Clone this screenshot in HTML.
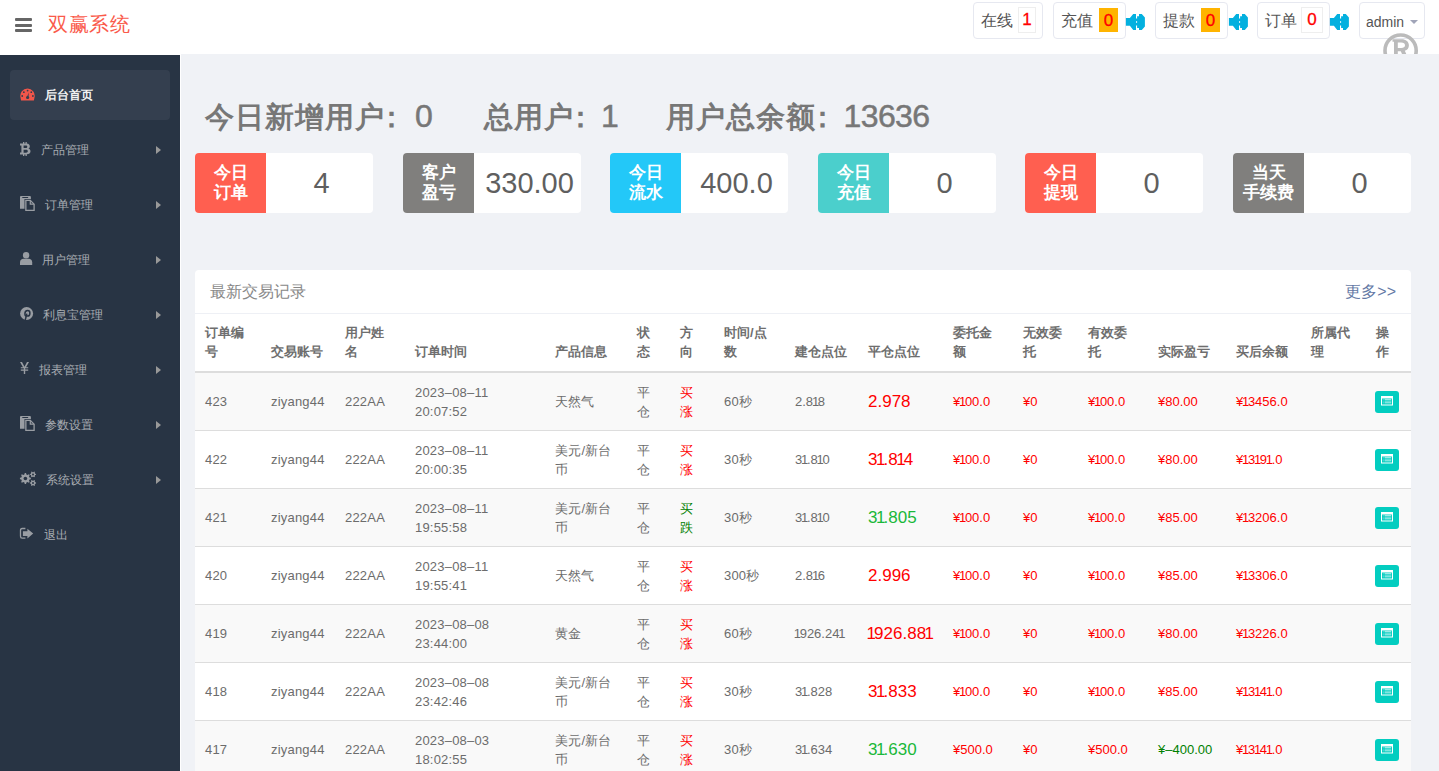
<!DOCTYPE html>
<html><head><meta charset="utf-8">
<style>
*{box-sizing:border-box;margin:0;padding:0}
html,body{width:1439px;height:771px;overflow:hidden;background:#fff;font-family:"Liberation Sans",sans-serif;color:#555}
.abs{position:absolute}
.d{font-weight:normal;font-size:32px;letter-spacing:-0.6px;-webkit-text-stroke:0.5px #777}
.c{position:relative;left:-8px}
#hdr{position:absolute;left:0;top:0;width:1439px;height:54px;background:#fff;overflow:hidden}
.ham{position:absolute;left:15px;width:17px;height:3px;background:#666;border-radius:1px}
.logo{position:absolute;left:48px;top:11px;font-size:20px;letter-spacing:0.7px;line-height:26px;color:#fa5a4b;white-space:nowrap}
.tb{position:absolute;top:2px;height:37px;border:1px solid #e6e8f0;border-radius:4px;background:#fff}
.tb .t{position:absolute;top:8px;font-size:16px;line-height:20px;color:#555;white-space:nowrap}
.tb .n{position:absolute;top:4px;height:26px;border:1px solid #eee;font-size:17px;line-height:24px;color:#f00;text-align:center;-webkit-text-stroke:0.3px #f00}
.tb .n.o{background:#ffb400;border-color:#ffb400}
.spk{position:absolute;top:13px;width:20px;height:17px}
#side{position:absolute;left:0;top:55px;width:180px;height:716px;background:#283444}
#side>*{margin-top:-1px}
.act{position:absolute;left:10px;top:16px;width:160px;height:50px;background:#343f4f;border-radius:4px}
.mi{position:absolute;font-size:12px;line-height:16px;color:#a9adb3;white-space:nowrap}
.arr{position:absolute;left:156px;width:0;height:0;border-left:5px solid #999;border-top:4px solid transparent;border-bottom:4px solid transparent}
.ico{position:absolute}
#main{position:absolute;left:181px;top:54px;width:1258px;height:717px;background:#f0f2f6}
.stat{position:absolute;top:44px;font-size:29px;letter-spacing:1px;line-height:36px;color:#777;font-weight:bold;white-space:nowrap}
.card{position:absolute;top:99px;width:178px;height:60px;background:#fff;border-radius:4px;overflow:hidden}
.card .lb{position:absolute;left:0;top:0;width:71px;height:60px;color:#fff;font-weight:bold;font-size:17px;line-height:20px;text-align:center;padding-top:10px}
.card .v{position:absolute;left:73px;top:0;width:107px;height:60px;text-align:center;font-size:29px;line-height:60px;color:#5f5f5f}
#panel{position:absolute;left:14px;top:216px;width:1216px;height:520px;background:#fff;border-radius:4px;overflow:hidden}
.ph{position:absolute;left:0;top:0;width:1216px;height:44px;border-bottom:1px solid #eef0f5}
.ph .ttl{position:absolute;left:15px;top:12px;font-size:16px;line-height:20px;color:#888}
.ph .more{position:absolute;right:15px;top:12px;font-size:16px;line-height:20px;color:#6479a5}
table{position:absolute;left:0;top:44px;width:1216px;border-collapse:collapse;table-layout:fixed;font-size:13px}
th,td{padding:11px 10px 9px;line-height:18.5px;text-align:left;vertical-align:middle;border-top:1px solid #ddd}
th{padding:10px 10px 10px;vertical-align:bottom;border-top:0;border-bottom:2px solid #ddd;color:#6e6e6e;font-weight:bold}
tbody tr:nth-child(odd){background:#f9f9f9}
td{color:#6c6c6c;letter-spacing:0.2px}
.r{color:#f00}.g{color:#008000}.gb{color:#1ab83a}
.big{font-size:17px}
.q{font-style:normal;margin-left:-0.09em;margin-right:-0.11em}
td:nth-child(n+9){letter-spacing:0}
.btn{display:inline-block;width:24px;height:22px;background:#03cdc0;border-radius:3px;position:relative;vertical-align:middle;margin-left:-1px;top:-1px}
</style></head><body>
<div id="hdr">
  <div class="ham" style="top:18px"></div>
  <div class="ham" style="top:23.5px"></div>
  <div class="ham" style="top:29px"></div>
  <div class="logo">双赢系统</div>
  <div class="tb" style="left:973px;width:70px"><span class="t" style="left:7px">在线</span><span class="n" style="left:44px;width:18px">1</span></div>
  <div class="tb" style="left:1053px;width:73px"><span class="t" style="left:7px">充值</span><span class="n o" style="left:45px;width:19px;top:5px;height:24px;line-height:23px">0</span></div>
  <svg class="spk" style="left:1125px;top:13px;width:21px;height:18px" viewBox="0 0 21 18"><path d="M0.9 5H4.9L8.2 0.95H11V16.9H8.2L4.9 12.8H0.9Z M12.1 3.3H14V0.95H16.8L19.9 4.45V13.5L16.8 16.9H14V14.9H12.1Z M11 5.5H12.1V8.2H11Z M11 9.8H12.1V12.5H11Z" fill="#03b0df"/></svg>
  <div class="tb" style="left:1155px;width:73px"><span class="t" style="left:7px">提款</span><span class="n o" style="left:45px;width:19px;top:5px;height:24px;line-height:23px">0</span></div>
  <svg class="spk" style="left:1228px;top:13px;width:21px;height:18px" viewBox="0 0 21 18"><path d="M0.9 5H4.9L8.2 0.95H11V16.9H8.2L4.9 12.8H0.9Z M12.1 3.3H14V0.95H16.8L19.9 4.45V13.5L16.8 16.9H14V14.9H12.1Z M11 5.5H12.1V8.2H11Z M11 9.8H12.1V12.5H11Z" fill="#03b0df"/></svg>
  <div class="tb" style="left:1257px;width:73px"><span class="t" style="left:7px">订单</span><span class="n" style="left:43px;width:22px">0</span></div>
  <svg class="spk" style="left:1329px;top:13px;width:21px;height:18px" viewBox="0 0 21 18"><path d="M0.9 5H4.9L8.2 0.95H11V16.9H8.2L4.9 12.8H0.9Z M12.1 3.3H14V0.95H16.8L19.9 4.45V13.5L16.8 16.9H14V14.9H12.1Z M11 5.5H12.1V8.2H11Z M11 9.8H12.1V12.5H11Z" fill="#03b0df"/></svg>
  <svg class="abs" style="left:1382px;top:32px;z-index:3" width="38" height="22" viewBox="0 0 38 22"><circle cx="18.6" cy="18.6" r="15.6" fill="none" stroke="#bbb" stroke-width="3.6"/><path d="M10.5 7.3H19.5C24 7.3 26.9 9.8 26.9 13.4C26.9 16 25.3 18 22.8 18.8L28 30H23.5L18.8 19.3H15.8V30H12V9.7H10.5Z M15.8 10.6V16.1H19.2C21.6 16.1 23 15.1 23 13.35C23 11.6 21.6 10.6 19.2 10.6Z" fill="#bbb" fill-rule="evenodd"/></svg>
  <div class="tb" style="left:1359px;width:66px;z-index:2"><span class="t" style="left:6px;top:9px;font-size:14px">admin</span><span class="abs" style="left:50px;top:17px;width:0;height:0;border-top:4px solid #a0a4b8;border-left:4px solid transparent;border-right:4px solid transparent"></span></div>
</div>
<div id="side">
  <div class="act"></div>
  <div class="mi" style="left:45px;top:32.5px"><span style="color:#f2f2f2;font-weight:bold">后台首页</span></div>
  <svg class="ico" style="left:20px;top:40px;margin-top:-7px" width="15" height="13" viewBox="0 0 15 13"><path d="M1.1 12.4L0.5 9.5A7.2 7.2 0 1 1 14.5 9.5L13.9 12.4Z" fill="#f2564a"/><circle cx="7.6" cy="2.6" r="0.9" fill="#343f4f"/><circle cx="3.85" cy="4.2" r="0.9" fill="#343f4f"/><circle cx="11.3" cy="4.2" r="0.9" fill="#343f4f"/><circle cx="2.2" cy="8" r="0.9" fill="#343f4f"/><circle cx="12.9" cy="8" r="0.9" fill="#343f4f"/><path d="M6.8 9.4L8.7 4.5L8.5 9.4Z" fill="#343f4f"/><circle cx="7.6" cy="9.5" r="1.6" fill="#343f4f"/></svg>
  <div class="mi" style="left:41px;top:87.5px">产品管理</div>
  <svg class="ico" style="left:20px;top:93.5px;margin-top:-7px" width="11" height="14" viewBox="0 0 11 14"><path d="M3 0h1.3v1.5h1.2V0h1.3v1.6c2 .3 3 1.3 3 2.8c0 1-.6 1.8-1.5 2.2c1.3.3 2.2 1.3 2.2 2.6c0 1.8-1.3 2.9-3.7 3.1V14H5.5v-1.6H4.3V14H3v-1.6H0v-1.8h1.4V3.4H0V1.6h3Z M3.6 3.4v2.6h2.2c.9 0 1.5-.5 1.5-1.3s-.6-1.3-1.5-1.3Z M3.6 7.8v2.9h2.5c1.1 0 1.7-.6 1.7-1.45S7.2 7.8 6.1 7.8Z" fill="#999da3" fill-rule="evenodd"/></svg>
  <div class="arr" style="top:91.5px"></div>
  <div class="mi" style="left:45px;top:142.5px">订单管理</div>
  <svg class="ico" style="left:20px;top:142px" width="16" height="17" viewBox="0 0 16 17"><path d="M0.9 0H10C10.5 0 10.9 .4 10.9 .9V12.8H0V.9C0 .4 .4 0 .9 0Z" fill="#999da3"/><rect x="2.1" y="1.1" width="6.2" height="0.9" rx="0.45" fill="#283444"/><path d="M4.5 3H10.6L15.7 8V16H4.5Z" fill="#283444"/><path d="M5.85 4.35H10.3L14.1 8.15V14.45H5.85Z" fill="none" stroke="#999da3" stroke-width="1.3"/><path d="M10.3 4.35V8.15H14.1" fill="none" stroke="#999da3" stroke-width="1.2"/></svg>
  <div class="arr" style="top:146.5px"></div>
  <div class="mi" style="left:42px;top:197.5px">用户管理</div>
  <svg class="ico" style="left:20px;top:198px" width="13" height="14" viewBox="0 0 13 14"><circle cx="6.1" cy="3.3" r="3.2" fill="#999da3"/><path d="M0 13V10.3C0 8 1.6 6.8 3.4 6.8H8.8C10.6 6.8 12.2 8 12.2 10.3V13Z" fill="#999da3"/></svg>
  <div class="arr" style="top:201.5px"></div>
  <div class="mi" style="left:43px;top:252.5px">利息宝管理</div>
  <svg class="ico" style="left:20px;top:253px" width="14" height="14" viewBox="0 0 14 14"><circle cx="6.6" cy="6.5" r="6.5" fill="#999da3"/><path d="M5.3 12.9L6.7 7.2M5.6 8.9C5 8.4 4.9 7.6 4.9 6.9C4.9 5 6.2 3.6 7.7 3.6C9.1 3.6 9.9 4.6 9.9 5.9C9.9 7.7 8.9 9.1 7.7 9.1C7 9.1 6.6 8.6 6.7 8" fill="none" stroke="#283444" stroke-width="1.5" stroke-linecap="round"/></svg>
  <div class="arr" style="top:256.5px"></div>
  <div class="mi" style="left:39px;top:307.5px">报表管理</div>
  <svg class="ico" style="left:20px;top:313.5px;margin-top:-7px" width="9" height="12" viewBox="0 0 9 12"><path d="M0 0h2l2.5 4.8L7 0h2L6 5.2h2.2v1.1H5.2v1.3h3v1.1h-3V12H3.8V8.7h-3V7.6h3V6.3h-3V5.2H3Z" fill="#999da3"/></svg>
  <div class="arr" style="top:311.5px"></div>
  <div class="mi" style="left:45px;top:362.5px">参数设置</div>
  <svg class="ico" style="left:20px;top:362px" width="16" height="17" viewBox="0 0 16 17"><path d="M0.9 0H10C10.5 0 10.9 .4 10.9 .9V12.8H0V.9C0 .4 .4 0 .9 0Z" fill="#999da3"/><rect x="2.1" y="1.1" width="6.2" height="0.9" rx="0.45" fill="#283444"/><path d="M4.5 3H10.6L15.7 8V16H4.5Z" fill="#283444"/><path d="M5.85 4.35H10.3L14.1 8.15V14.45H5.85Z" fill="none" stroke="#999da3" stroke-width="1.3"/><path d="M10.3 4.35V8.15H14.1" fill="none" stroke="#999da3" stroke-width="1.2"/></svg>
  <div class="arr" style="top:366.5px"></div>
  <div class="mi" style="left:46px;top:417.5px">系统设置</div>
  <svg class="ico" style="left:15px;top:411px" width="25" height="25" viewBox="0 0 25 25"><path d="M14.48 12.50 L15.86 12.87 L15.86 14.13 L14.48 14.50 L13.99 15.68 L14.71 16.92 L13.82 17.81 L12.58 17.09 L11.40 17.58 L11.03 18.96 L9.77 18.96 L9.40 17.58 L8.22 17.09 L6.98 17.81 L6.09 16.92 L6.81 15.68 L6.32 14.50 L4.94 14.13 L4.94 12.87 L6.32 12.50 L6.81 11.32 L6.09 10.08 L6.98 9.19 L8.22 9.91 L9.40 9.42 L9.77 8.04 L11.03 8.04 L11.40 9.42 L12.58 9.91 L13.82 9.19 L14.71 10.08 L13.99 11.32Z" fill="#999da3"/><circle cx="10.4" cy="13.5" r="1.8" fill="#283444"/><path d="M20.18 8.68 L21.06 8.93 L21.06 9.87 L20.18 10.12 L19.72 10.93 L19.94 11.82 L19.13 12.29 L18.47 11.65 L17.53 11.65 L16.87 12.29 L16.06 11.82 L16.28 10.93 L15.82 10.12 L14.94 9.87 L14.94 8.93 L15.82 8.68 L16.28 7.87 L16.06 6.98 L16.87 6.51 L17.53 7.15 L18.47 7.15 L19.13 6.51 L19.94 6.98 L19.72 7.87Z" fill="#999da3"/><circle cx="18" cy="9.4" r="1" fill="#283444"/><path d="M20.18 17.28 L21.06 17.53 L21.06 18.47 L20.18 18.72 L19.72 19.53 L19.94 20.42 L19.13 20.89 L18.47 20.25 L17.53 20.25 L16.87 20.89 L16.06 20.42 L16.28 19.53 L15.82 18.72 L14.94 18.47 L14.94 17.53 L15.82 17.28 L16.28 16.47 L16.06 15.58 L16.87 15.11 L17.53 15.75 L18.47 15.75 L19.13 15.11 L19.94 15.58 L19.72 16.47Z" fill="#999da3"/><circle cx="18" cy="18" r="1" fill="#283444"/></svg>
  <div class="arr" style="top:421.5px"></div>
  <div class="mi" style="left:44px;top:472.5px">退出</div>
  <svg class="ico" style="left:15px;top:466px" width="25" height="25" viewBox="0 0 25 25"><path d="M10.4 8.5H7.2C6 8.5 5.5 9.2 5.5 10.4V16.3C5.5 17.5 6 18.2 7.2 18.2H10.4" fill="none" stroke="#999da3" stroke-width="1.3"/><path d="M7.9 11.2H12.4V8.8L18.2 13.6L12.4 18.6V15.9H7.9Z" fill="#999da3"/></svg>
</div>
<div id="main">
  <div class="stat" style="left:24px">今日新增用户<span class="c">：</span><span class="d">0</span></div>
  <div class="stat" style="left:303px">总用户<span class="c">：</span><span class="d" style="margin-left:-3px">1</span></div>
  <div class="stat" style="left:485px">用户总余额<span class="c">：</span><span class="d" style="margin-left:-2.5px">13636</span></div>
  <div class="card" style="left:14px"><div class="lb" style="background:#ff5f50">今日<br>订单</div><div class="v">4</div></div>
  <div class="card" style="left:222px"><div class="lb" style="background:#807f7d">客户<br>盈亏</div><div class="v">330.00</div></div>
  <div class="card" style="left:429px"><div class="lb" style="background:#23c8f8">今日<br>流水</div><div class="v">400.0</div></div>
  <div class="card" style="left:637px"><div class="lb" style="background:#4bcfcc">今日<br>充值</div><div class="v">0</div></div>
  <div class="card" style="left:844px"><div class="lb" style="background:#ff5f50">今日<br>提现</div><div class="v">0</div></div>
  <div class="card" style="left:1052px"><div class="lb" style="background:#807f7d">当天<br>手续费</div><div class="v">0</div></div>
  <div id="panel"><div class="ph"><span class="ttl">最新交易记录</span><span class="more">更多&gt;&gt;</span></div>
<table><colgroup><col style="width:66px"><col style="width:74px"><col style="width:70px"><col style="width:140px"><col style="width:82px"><col style="width:43px"><col style="width:44px"><col style="width:71px"><col style="width:73px"><col style="width:85px"><col style="width:70px"><col style="width:65px"><col style="width:70px"><col style="width:78px"><col style="width:75px"><col style="width:65px"><col style="width:45px"></colgroup><thead><tr><th>订单编号</th><th>交易账号</th><th>用户姓名</th><th>订单时间</th><th>产品信息</th><th>状态</th><th>方向</th><th>时间/点数</th><th>建仓点位</th><th>平仓点位</th><th>委托金额</th><th>无效委托</th><th>有效委托</th><th>实际盈亏</th><th>买后余额</th><th>所属代理</th><th>操作</th></tr></thead><tbody>
<tr><td>423</td><td>ziyang44</td><td>222AA</td><td>2023–08–11<br>20:07:52</td><td>天然气</td><td>平<br>仓</td><td class="r">买<br>涨</td><td>60秒</td><td>2.8<i class="q">1</i>8</td><td class="r big">2.978</td><td class="r">¥<i class="q">1</i>00.0</td><td class="r">¥0</td><td class="r">¥<i class="q">1</i>00.0</td><td class="r">¥80.00</td><td class="r">¥<i class="q">1</i>3456.0</td><td></td><td><span class="btn"><svg style="position:absolute;left:6px;top:5px" width="12" height="10" viewBox="0 0 12 10"><path d="M0 0H12V9.4H0Z M1 2.4V8.4H11V2.4Z" fill="#fff" fill-rule="evenodd"/><rect x="3.6" y="3.2" width="6.6" height="1.1" fill="#fff" opacity="0.75"/><rect x="3.6" y="5.3" width="6.6" height="2.1" fill="#fff" opacity="0.5"/><rect x="1.6" y="3.2" width="1.4" height="1.1" fill="#fff" opacity="0.3"/><rect x="1.6" y="5.3" width="1.4" height="2.1" fill="#fff" opacity="0.25"/></svg></span></td></tr>
<tr><td>422</td><td>ziyang44</td><td>222AA</td><td>2023–08–11<br>20:00:35</td><td>美元/新台<br>币</td><td>平<br>仓</td><td class="r">买<br>涨</td><td>30秒</td><td>3<i class="q">1</i>.8<i class="q">1</i>0</td><td class="r big">3<i class="q">1</i>.8<i class="q">1</i>4</td><td class="r">¥<i class="q">1</i>00.0</td><td class="r">¥0</td><td class="r">¥<i class="q">1</i>00.0</td><td class="r">¥80.00</td><td class="r">¥<i class="q">1</i>3<i class="q">1</i>9<i class="q">1</i>.0</td><td></td><td><span class="btn"><svg style="position:absolute;left:6px;top:5px" width="12" height="10" viewBox="0 0 12 10"><path d="M0 0H12V9.4H0Z M1 2.4V8.4H11V2.4Z" fill="#fff" fill-rule="evenodd"/><rect x="3.6" y="3.2" width="6.6" height="1.1" fill="#fff" opacity="0.75"/><rect x="3.6" y="5.3" width="6.6" height="2.1" fill="#fff" opacity="0.5"/><rect x="1.6" y="3.2" width="1.4" height="1.1" fill="#fff" opacity="0.3"/><rect x="1.6" y="5.3" width="1.4" height="2.1" fill="#fff" opacity="0.25"/></svg></span></td></tr>
<tr><td>421</td><td>ziyang44</td><td>222AA</td><td>2023–08–11<br>19:55:58</td><td>美元/新台<br>币</td><td>平<br>仓</td><td class="g">买<br>跌</td><td>30秒</td><td>3<i class="q">1</i>.8<i class="q">1</i>0</td><td class="gb big">3<i class="q">1</i>.805</td><td class="r">¥<i class="q">1</i>00.0</td><td class="r">¥0</td><td class="r">¥<i class="q">1</i>00.0</td><td class="r">¥85.00</td><td class="r">¥<i class="q">1</i>3206.0</td><td></td><td><span class="btn"><svg style="position:absolute;left:6px;top:5px" width="12" height="10" viewBox="0 0 12 10"><path d="M0 0H12V9.4H0Z M1 2.4V8.4H11V2.4Z" fill="#fff" fill-rule="evenodd"/><rect x="3.6" y="3.2" width="6.6" height="1.1" fill="#fff" opacity="0.75"/><rect x="3.6" y="5.3" width="6.6" height="2.1" fill="#fff" opacity="0.5"/><rect x="1.6" y="3.2" width="1.4" height="1.1" fill="#fff" opacity="0.3"/><rect x="1.6" y="5.3" width="1.4" height="2.1" fill="#fff" opacity="0.25"/></svg></span></td></tr>
<tr><td>420</td><td>ziyang44</td><td>222AA</td><td>2023–08–11<br>19:55:41</td><td>天然气</td><td>平<br>仓</td><td class="r">买<br>涨</td><td>300秒</td><td>2.8<i class="q">1</i>6</td><td class="r big">2.996</td><td class="r">¥<i class="q">1</i>00.0</td><td class="r">¥0</td><td class="r">¥<i class="q">1</i>00.0</td><td class="r">¥85.00</td><td class="r">¥<i class="q">1</i>3306.0</td><td></td><td><span class="btn"><svg style="position:absolute;left:6px;top:5px" width="12" height="10" viewBox="0 0 12 10"><path d="M0 0H12V9.4H0Z M1 2.4V8.4H11V2.4Z" fill="#fff" fill-rule="evenodd"/><rect x="3.6" y="3.2" width="6.6" height="1.1" fill="#fff" opacity="0.75"/><rect x="3.6" y="5.3" width="6.6" height="2.1" fill="#fff" opacity="0.5"/><rect x="1.6" y="3.2" width="1.4" height="1.1" fill="#fff" opacity="0.3"/><rect x="1.6" y="5.3" width="1.4" height="2.1" fill="#fff" opacity="0.25"/></svg></span></td></tr>
<tr><td>419</td><td>ziyang44</td><td>222AA</td><td>2023–08–08<br>23:44:00</td><td>黄金</td><td>平<br>仓</td><td class="r">买<br>涨</td><td>60秒</td><td><i class="q">1</i>926.24<i class="q">1</i></td><td class="r big"><i class="q">1</i>926.88<i class="q">1</i></td><td class="r">¥<i class="q">1</i>00.0</td><td class="r">¥0</td><td class="r">¥<i class="q">1</i>00.0</td><td class="r">¥80.00</td><td class="r">¥<i class="q">1</i>3226.0</td><td></td><td><span class="btn"><svg style="position:absolute;left:6px;top:5px" width="12" height="10" viewBox="0 0 12 10"><path d="M0 0H12V9.4H0Z M1 2.4V8.4H11V2.4Z" fill="#fff" fill-rule="evenodd"/><rect x="3.6" y="3.2" width="6.6" height="1.1" fill="#fff" opacity="0.75"/><rect x="3.6" y="5.3" width="6.6" height="2.1" fill="#fff" opacity="0.5"/><rect x="1.6" y="3.2" width="1.4" height="1.1" fill="#fff" opacity="0.3"/><rect x="1.6" y="5.3" width="1.4" height="2.1" fill="#fff" opacity="0.25"/></svg></span></td></tr>
<tr><td>418</td><td>ziyang44</td><td>222AA</td><td>2023–08–08<br>23:42:46</td><td>美元/新台<br>币</td><td>平<br>仓</td><td class="r">买<br>涨</td><td>30秒</td><td>3<i class="q">1</i>.828</td><td class="r big">3<i class="q">1</i>.833</td><td class="r">¥<i class="q">1</i>00.0</td><td class="r">¥0</td><td class="r">¥<i class="q">1</i>00.0</td><td class="r">¥85.00</td><td class="r">¥<i class="q">1</i>3<i class="q">1</i>4<i class="q">1</i>.0</td><td></td><td><span class="btn"><svg style="position:absolute;left:6px;top:5px" width="12" height="10" viewBox="0 0 12 10"><path d="M0 0H12V9.4H0Z M1 2.4V8.4H11V2.4Z" fill="#fff" fill-rule="evenodd"/><rect x="3.6" y="3.2" width="6.6" height="1.1" fill="#fff" opacity="0.75"/><rect x="3.6" y="5.3" width="6.6" height="2.1" fill="#fff" opacity="0.5"/><rect x="1.6" y="3.2" width="1.4" height="1.1" fill="#fff" opacity="0.3"/><rect x="1.6" y="5.3" width="1.4" height="2.1" fill="#fff" opacity="0.25"/></svg></span></td></tr>
<tr><td>417</td><td>ziyang44</td><td>222AA</td><td>2023–08–03<br>18:02:55</td><td>美元/新台<br>币</td><td>平<br>仓</td><td class="r">买<br>涨</td><td>30秒</td><td>3<i class="q">1</i>.634</td><td class="gb big">3<i class="q">1</i>.630</td><td class="r">¥500.0</td><td class="r">¥0</td><td class="r">¥500.0</td><td class="g">¥–400.00</td><td class="r">¥<i class="q">1</i>3<i class="q">1</i>4<i class="q">1</i>.0</td><td></td><td><span class="btn"><svg style="position:absolute;left:6px;top:5px" width="12" height="10" viewBox="0 0 12 10"><path d="M0 0H12V9.4H0Z M1 2.4V8.4H11V2.4Z" fill="#fff" fill-rule="evenodd"/><rect x="3.6" y="3.2" width="6.6" height="1.1" fill="#fff" opacity="0.75"/><rect x="3.6" y="5.3" width="6.6" height="2.1" fill="#fff" opacity="0.5"/><rect x="1.6" y="3.2" width="1.4" height="1.1" fill="#fff" opacity="0.3"/><rect x="1.6" y="5.3" width="1.4" height="2.1" fill="#fff" opacity="0.25"/></svg></span></td></tr>
</tbody></table>
  </div>
</div>
</body></html>
